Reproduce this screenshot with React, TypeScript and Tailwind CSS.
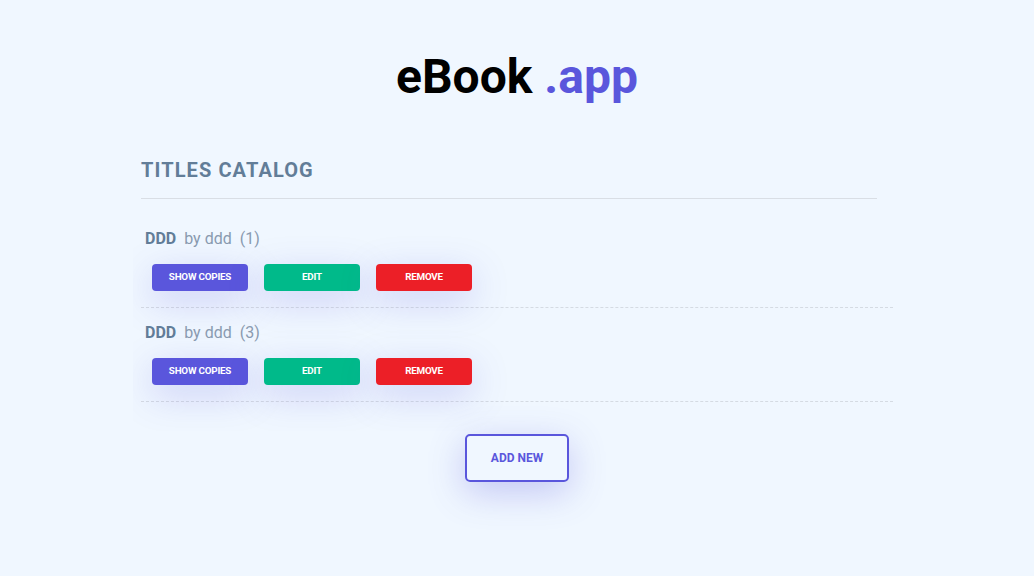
import React from "react"

type Title = {
  name: string
  author: string
  copies: number
}

const titles: Title[] = [
  { name: "DDD", author: "ddd", copies: 1 },
  { name: "DDD", author: "ddd", copies: 3 },
]

function ActionButton({ label, color }: { label: string; color: string }) {
  return (
    <button
      className={`w-24 h-[27px] rounded-[4px] text-white text-[9.8px] font-bold tracking-[-0.2px] shadow-[0_10px_36px_rgba(90,86,220,0.25)] ${color}`}
    >
      {label}
    </button>
  )
}

export default function App() {
  return (
    <div
      className="min-h-[576px] bg-[#f0f7ff] pt-[53px]"
      style={{ fontFamily: "Roboto, 'Liberation Sans', sans-serif" }}
    >
      <h1 className="text-center text-[48px] leading-[48px] font-bold text-black">
        eBook <span className="text-[#5a56dc]">.app</span>
      </h1>

      <div className="w-[752px] mx-auto mt-[55px]">
        <div className="mr-[16px] border-b border-[#d9dee5] pb-[14px]">
          <h2 className="text-[20px] leading-[28px] font-bold tracking-[1.1px] text-[#627d98]">
            TITLES CATALOG
          </h2>
        </div>

        <div className="-mx-2 px-2 pt-[15px] pb-[29px] overflow-hidden">
          <ul>
            {titles.map((t, i) => (
              <li key={i} className="pt-[13px] pb-4 border-b border-dashed border-[#d5dbe3]">
                <div className="pl-1 flex items-baseline gap-2 text-[16px] leading-6">
                  <span className="font-bold text-[#627d98]">{t.name}</span>
                  <span className="text-[#8a9bb0]">by {t.author}</span>
                  <span className="text-[#8a9bb0]">({t.copies})</span>
                </div>
                <div className="mt-[13px] pl-[11px] flex gap-4">
                  <ActionButton label="SHOW COPIES" color="bg-[#5a56dc]" />
                  <ActionButton label="EDIT" color="bg-[#00ba8a]" />
                  <ActionButton label="REMOVE" color="bg-[#ec1f27]" />
                </div>
              </li>
            ))}
          </ul>
        </div>

        <div className="flex justify-center pt-[3px] pb-10">
          <button className="w-[104px] h-12 rounded-[5px] border-2 border-[#5a56dc] text-[#5a56dc] text-[12px] font-bold shadow-[0_10px_36px_rgba(90,86,220,0.3)]">
            ADD NEW
          </button>
        </div>
      </div>
    </div>
  )
}
